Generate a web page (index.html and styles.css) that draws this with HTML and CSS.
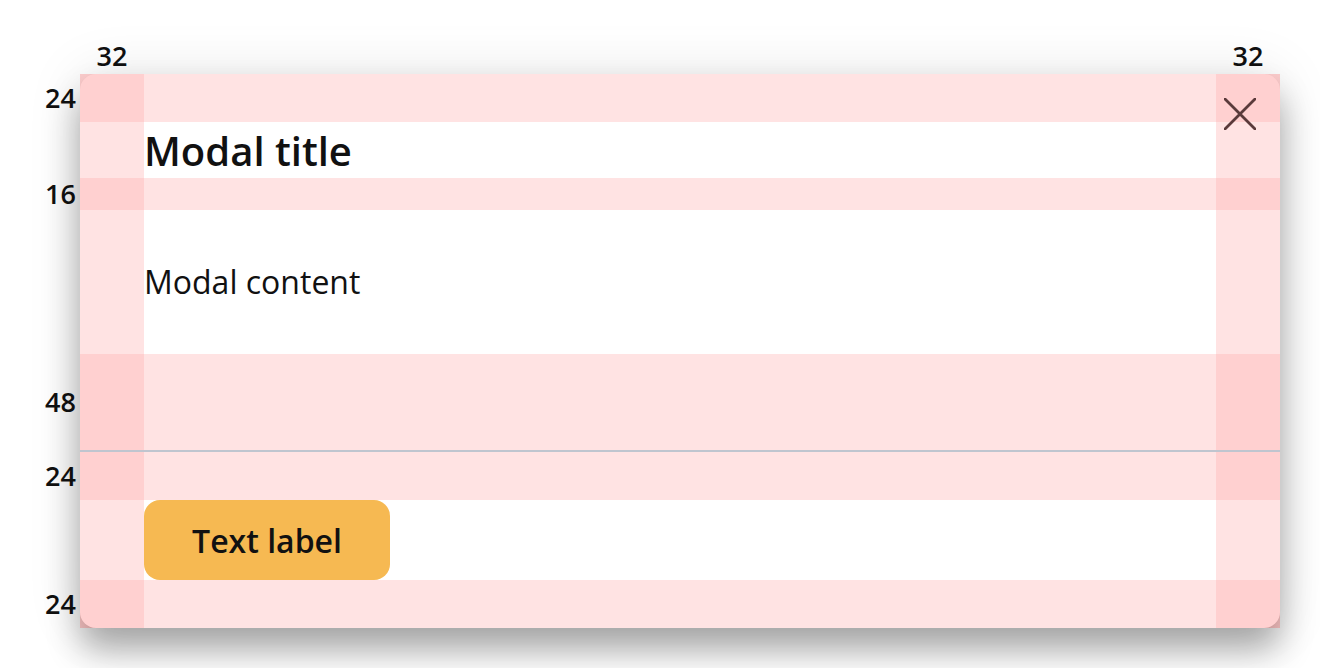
FILE: index.html
```html
<!DOCTYPE html>
<html lang="en">
<head>
<meta charset="utf-8">
<title>Modal spacing spec</title>
<link rel="stylesheet" href="styles.css">
</head>
<body>
<div class="frame">
  <div class="corner-spacer"></div>
  <div class="top-labels">
    <span class="col-label">32</span>
    <span class="col-label">32</span>
  </div>
  <div class="top-spacer"></div>

  <div class="side-labels">
    <div class="band h48"><span class="row-label">24</span></div>
    <div class="band h56"></div>
    <div class="band h32"><span class="row-label">16</span></div>
    <div class="band h144"></div>
    <div class="band h96"><span class="row-label">48</span></div>
    <div class="band h2"></div>
    <div class="band h48"><span class="row-label">24</span></div>
    <div class="band h80"></div>
    <div class="band h48"><span class="row-label">24</span></div>
  </div>

  <div class="modal">
    <button class="close" aria-label="Close">
      <svg width="32" height="32" viewBox="0 0 32 32"><path d="M1 1 L31 31 M31 1 L1 31" stroke="#5a3a3b" stroke-width="2.8" fill="none" stroke-linecap="round"/></svg>
    </button>

    <div class="c-dark"></div><div class="c-light"></div><div class="c-dark"></div>
    <div class="c-light"></div><div class="c-white title-cell"><h2 class="title">Modal title</h2></div><div class="c-light"></div>
    <div class="c-dark"></div><div class="c-light"></div><div class="c-dark"></div>
    <div class="c-light"></div><div class="c-white content-cell"><p class="content">Modal content</p></div><div class="c-light"></div>
    <div class="c-dark"></div><div class="c-light"></div><div class="c-dark"></div>
    <div class="divider"></div>
    <div class="c-dark"></div><div class="c-light"></div><div class="c-dark"></div>
    <div class="c-light"></div><div class="c-white footer-cell"><button class="btn">Text label</button></div><div class="c-light"></div>
    <div class="c-dark"></div><div class="c-light"></div><div class="c-dark"></div>
  </div>
</div>
</body>
</html>
```

FILE: styles.css
```css
* { box-sizing: border-box; }

html, body {
  margin: 0;
  padding: 0;
  background: #ffffff;
  font-family: "Open Sans", "Noto Sans", sans-serif;
  color: #111111;
  overflow: hidden;
}

.frame {
  display: grid;
  grid-template-columns: 80px 1200px 40px;
  grid-template-rows: 74px 554px 40px;
  height: 668px;
}

.top-labels {
  display: flex;
  justify-content: space-between;
  align-items: flex-end;
  padding-bottom: 2px;
}

.col-label {
  width: 64px;
  text-align: center;
  font-size: 27px;
  font-weight: 600;
  line-height: 32px;
}

.side-labels {
  display: flex;
  flex-direction: column;
}

.band {
  display: flex;
  align-items: center;
  justify-content: flex-end;
  padding-right: 4px;
}

.row-label {
  font-size: 27px;
  font-weight: 600;
  line-height: 32px;
}

.h2 { height: 2px; }
.h32 { height: 32px; }
.h48 { height: 48px; }
.h56 { height: 56px; }
.h80 { height: 80px; }
.h96 { height: 96px; }
.h144 { height: 144px; }

.modal {
  position: relative;
  display: grid;
  grid-template-columns: 64px 1fr 64px;
  grid-template-rows: 48px 56px 32px 144px 96px 2px 48px 80px 48px;
  border-radius: 16px;
  background: #ffffff;
  box-shadow: 0 22px 34px rgba(0, 0, 0, 0.32), 0 0 56px rgba(0, 0, 0, 0.10);
}

.c-dark { background: rgba(255, 0, 0, 0.185); }
.c-light { background: rgba(255, 0, 0, 0.11); }
.c-white { background: transparent; }

.divider {
  grid-column: 1 / -1;
  background: #bfc5cf;
}

.title-cell {
  display: flex;
  align-items: center;
}

.title {
  margin: 0;
  font-size: 40px;
  font-weight: 600;
  line-height: 56px;
  padding-top: 2px;
  color: #111111;
}

.content-cell {
  display: flex;
  align-items: center;
}

.content {
  margin: 0;
  font-size: 32px;
  font-weight: 400;
  line-height: 40px;
  color: #111111;
}

.footer-cell {
  display: flex;
  align-items: stretch;
}

.btn {
  width: 246px;
  border: none;
  border-radius: 16px;
  background: #f6b952;
  font-family: "Open Sans", "Noto Sans", sans-serif;
  font-size: 32px;
  font-weight: 600;
  color: #111111;
  padding: 0;
}

.close {
  position: absolute;
  top: 24px;
  right: 24px;
  width: 32px;
  height: 32px;
  padding: 0;
  border: none;
  background: transparent;
  display: flex;
}
```
